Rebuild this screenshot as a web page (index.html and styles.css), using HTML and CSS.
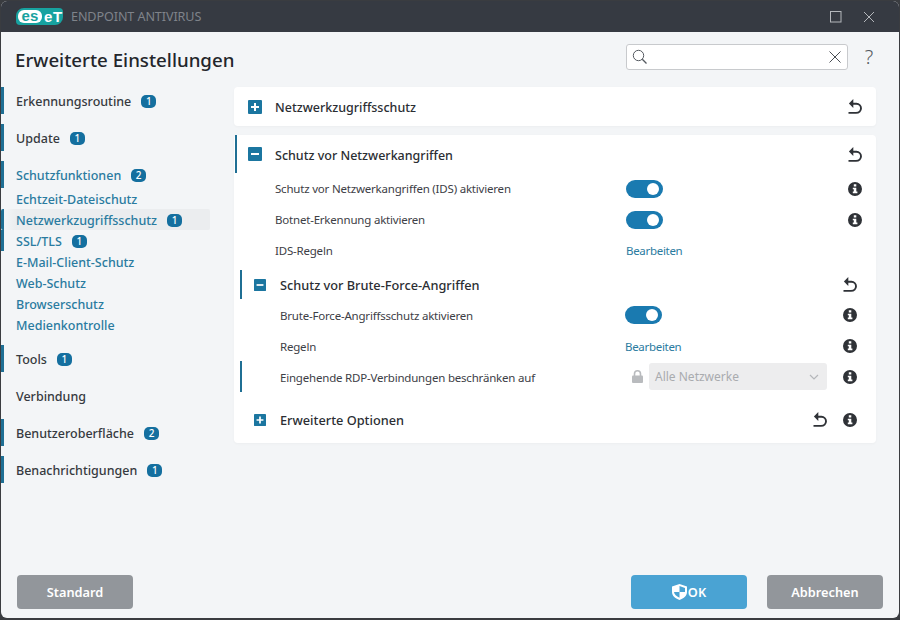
FILE: index.html
```html
<!DOCTYPE html>
<html lang="de">
<head>
<meta charset="utf-8">
<title>ESET Endpoint Antivirus</title>
<link rel="stylesheet" href="styles.css">
</head>
<body>
<svg class="defs" width="0" height="0" aria-hidden="true">
  <symbol id="i-reset" viewBox="0 0 14 15">
    <path d="M.5 13.900H8C11 13.900 13 11.900 13 9.300C13 6.700 11 4.800 8.500 4.800H3.500" fill="none" stroke="currentColor" stroke-width="1.900"/>
    <path d="M5.300 0L.9 4.500L5.300 9V0Z" fill="currentColor"/>
  </symbol>
  <symbol id="i-info" viewBox="0 0 14 14">
    <path fill-rule="evenodd" d="M7 0a7 7 0 1 1 0 14A7 7 0 0 1 7 0ZM5.800 2.300v2.300h2.500V2.300ZM4.800 5.800v1.500h1v2.300h-1v1.600h4.600V9.600H8.300V5.800Z" fill="currentColor"/>
  </symbol>
  <symbol id="i-plus" viewBox="0 0 14 14">
    <rect width="14" height="14" rx="1" fill="#1b76a0"/>
    <path d="M3 7h8M7 3v8" stroke="#fff" stroke-width="2"/>
  </symbol>
  <symbol id="i-minus" viewBox="0 0 14 14">
    <rect width="14" height="14" rx="1" fill="#1b76a0"/>
    <path d="M3 7h8" stroke="#fff" stroke-width="2"/>
  </symbol>
</svg>
<div class="window">
  <header class="titlebar">
    <div class="brand">
      <span class="logo"><span class="logo-es">es</span><span class="logo-et">eT</span></span>
      <span class="product">ENDPOINT ANTIVIRUS</span>
    </div>
    <div class="win-controls">
      <svg class="win-icon" width="12" height="12" viewBox="0 0 12 12"><rect x=".5" y=".5" width="10.500" height="10.500" fill="none" stroke="currentColor"/></svg>
      <svg class="win-icon" width="12" height="12" viewBox="0 0 12 12"><path d="M1 1l10 10M11 1L1 11" fill="none" stroke="currentColor"/></svg>
    </div>
  </header>

  <div class="pagehead">
    <h1 class="pagetitle">Erweiterte Einstellungen</h1>
    <div class="searchbox">
      <svg width="16" height="16" viewBox="0 0 16 16"><circle cx="6.500" cy="6.500" r="5.200" fill="none" stroke="#555a60" stroke-width="1"/><path d="M10.300 10.300L14.500 14.500" stroke="#555a60" stroke-width="1.300"/></svg>
      <svg width="12" height="12" viewBox="0 0 12 12"><path d="M.5.500l11 11M11.500.500l-11 11" fill="none" stroke="#4a4e54" stroke-width="1"/></svg>
    </div>
    <span class="help">?</span>
  </div>

  <div class="content">
    <nav class="nav">
      <a class="nav-top marked">Erkennungsroutine <span class="badge">1</span></a>
      <a class="nav-top marked">Update <span class="badge">1</span></a>
      <div class="nav-group">
        <a class="nav-top active marked">Schutzfunktionen <span class="badge">2</span></a>
        <div class="nav-subs">
          <a class="nav-sub">Echtzeit-Dateischutz</a>
          <a class="nav-sub selected marked">Netzwerkzugriffsschutz <span class="badge">1</span></a>
          <a class="nav-sub marked">SSL/TLS <span class="badge">1</span></a>
          <a class="nav-sub">E-Mail-Client-Schutz</a>
          <a class="nav-sub">Web-Schutz</a>
          <a class="nav-sub">Browserschutz</a>
          <a class="nav-sub">Medienkontrolle</a>
        </div>
      </div>
      <a class="nav-top marked">Tools <span class="badge">1</span></a>
      <a class="nav-top">Verbindung</a>
      <a class="nav-top marked">Benutzeroberfläche <span class="badge">2</span></a>
      <a class="nav-top marked">Benachrichtigungen <span class="badge">1</span></a>
    </nav>

    <main class="main">
      <section class="card card-collapsed">
        <div class="section-head">
          <svg class="sq" width="14" height="14"><use href="#i-plus"/></svg>
          <span class="section-title">Netzwerkzugriffsschutz</span>
          <svg class="ico reset" width="14" height="15"><use href="#i-reset"/></svg>
        </div>
      </section>

      <section class="card">
        <div class="section-head marked-head">
          <svg class="sq" width="14" height="14"><use href="#i-minus"/></svg>
          <span class="section-title">Schutz vor Netzwerkangriffen</span>
          <svg class="ico reset" width="14" height="15"><use href="#i-reset"/></svg>
        </div>
        <div class="rows">
          <div class="row">
            <span class="label">Schutz vor Netzwerkangriffen (IDS) aktivieren</span>
            <span class="toggle"></span>
            <svg class="ico info" width="14" height="14"><use href="#i-info"/></svg>
          </div>
          <div class="row">
            <span class="label">Botnet-Erkennung aktivieren</span>
            <span class="toggle"></span>
            <svg class="ico info" width="14" height="14"><use href="#i-info"/></svg>
          </div>
          <div class="row">
            <span class="label">IDS-Regeln</span>
            <a class="link">Bearbeiten</a>
          </div>
        </div>

        <div class="sub">
          <div class="sub-head">
            <svg class="sq small" width="12" height="12"><use href="#i-minus"/></svg>
            <span class="sub-title">Schutz vor Brute-Force-Angriffen</span>
            <svg class="ico reset" width="14" height="15"><use href="#i-reset"/></svg>
          </div>
          <div class="sub-rows">
            <div class="row sub-row">
              <span class="label">Brute-Force-Angriffsschutz aktivieren</span>
              <span class="toggle"></span>
              <svg class="ico info" width="14" height="14"><use href="#i-info"/></svg>
            </div>
            <div class="row sub-row">
              <span class="label">Regeln</span>
              <a class="link">Bearbeiten</a>
              <svg class="ico info" width="14" height="14"><use href="#i-info"/></svg>
            </div>
            <div class="row sub-row marked-row">
              <span class="label">Eingehende RDP-Verbindungen beschränken auf</span>
              <div class="locked">
                <svg width="11" height="13" viewBox="0 0 11 13"><path d="M2.500 6V3.800a3 3 0 0 1 6 0V6" fill="none" stroke="#b9bbbe" stroke-width="1.600"/><rect y="5.500" width="11" height="7.500" rx="1" fill="#b9bbbe"/></svg>
                <div class="select">
                  <span>Alle Netzwerke</span>
                  <svg width="10" height="6" viewBox="0 0 10 6"><path d="M1 1l4 4 4-4" fill="none" stroke="#b5b7ba" stroke-width="1.200"/></svg>
                </div>
              </div>
              <svg class="ico info" width="14" height="14"><use href="#i-info"/></svg>
            </div>
          </div>
          <div class="sub-head more">
            <svg class="sq small" width="12" height="12"><use href="#i-plus"/></svg>
            <span class="sub-title">Erweiterte Optionen</span>
            <svg class="ico reset" width="14" height="15"><use href="#i-reset"/></svg>
            <svg class="ico info" width="14" height="14"><use href="#i-info"/></svg>
          </div>
        </div>
      </section>
    </main>
  </div>

  <footer class="footer">
    <button class="btn btn-gray" type="button">Standard</button>
    <div class="footer-right">
      <button class="btn btn-blue" type="button">
        <svg width="15" height="16" viewBox="0 0 15 16"><path fill-rule="evenodd" d="M7.500 0L15 2.500V8c0 3.500-3 6.500-7.500 8C3 14.500 0 11.500 0 8V2.500ZM7.500 2v6H2c.3 2.400 2.400 4.400 5.500 5.700V8H13V3.900Z" fill="#fff"/></svg>OK</button>
      <button class="btn btn-gray" type="button">Abbrechen</button>
    </div>
  </footer>
</div>
</body>
</html>
```

FILE: styles.css
```css
* { box-sizing: border-box; }
html, body { margin: 0; height: 100%; }
body {
  background: #3a3c40;
  font-family: "Noto Sans", "Open Sans", sans-serif;
  color: #2f3237;
  overflow: hidden;
  padding: 1px 1px 2px 1px;
}
.defs { position: absolute; }
.window {
  height: 617px;
  background: #f3f5f7;
  border-radius: 6px;
  overflow: hidden;
  display: flex;
  flex-direction: column;
}
.titlebar {
  flex: 0 0 31px;
  background: #363a42;
  display: flex;
  align-items: center;
  justify-content: space-between;
  padding: 0 24px 0 15px;
}
.brand { display: flex; align-items: center; gap: 8px; }
.logo {
  display: flex;
  align-items: center;
  height: 17px;
  width: 47px;
  border-radius: 8px 4px 8px 4px;
  background: #17a2a0;
  overflow: hidden;
  padding-left: 2px;
  font-family: "Liberation Sans", sans-serif;
  font-weight: 700;
  font-size: 15px;
  line-height: 13px;
}
.logo-es {
  background: #fff;
  color: #17a2a0;
  border-radius: 6px;
  height: 13px;
  width: 24px;
  text-align: center;
  line-height: 11px;
}
.logo-et {
  color: #fff;
  letter-spacing: .8px;
  padding-left: 2px;
  line-height: 13px;
  height: 13px;
}
.product { color: #7f838a; font-size: 12.6px; letter-spacing: -.1px; }
.win-controls { display: flex; gap: 21px; align-items: center; }
.win-icon { color: #b4b7bb; display: block; }

.pagehead {
  flex: 0 0 55px;
  display: flex;
  align-items: center;
  padding: 0 21px 0 14px;
}
.pagetitle {
  margin: 0;
  font-size: 18.700px;
  font-weight: 500;
  color: #23262b;
  flex: 1;
  line-height: 26px;
}
.searchbox {
  width: 222px;
  height: 26px;
  margin-bottom: 6px;
  background: #fff;
  border: 1px solid #c8cacd;
  border-radius: 3px;
  display: flex;
  align-items: center;
  justify-content: space-between;
  padding: 0 6px 0 5px;
}
.help {
  width: 40px;
  margin-right: -10px;
  margin-bottom: 6px;
  padding-left: 2px;
  text-align: center;
  font-size: 20px;
  font-weight: 300;
  line-height: 24px;
  color: #555a60;
}

.content { flex: 1; display: flex; min-height: 0; }
.nav {
  flex: 0 0 233px;
  display: flex;
  flex-direction: column;
}
.nav a { display: flex; align-items: center; gap: 8px; white-space: nowrap; }
.nav-top {
  height: 27px;
  margin-bottom: 10px;
  padding: 2px 0 0 12px;
  border-left: 3px solid transparent;
  font-size: 12.500px;
  font-weight: 500;
  color: #363a40;
}
.nav-top.marked { border-left-color: #1f6f94; }
.nav-top.active { color: #2a7ba0; height: 27px; margin-bottom: 0; }
.nav-group { margin-bottom: 10px; }
.nav-sub {
  height: 21px;
  margin-right: 24px;
  padding: 2px 0 0 12px;
  border-left: 3px solid transparent;
  font-size: 12.500px;
  font-weight: 500;
  color: #2a7ba0;
}
.nav-sub.marked { border-left-color: #1f6f94; }
.nav-sub.selected { background: linear-gradient(90deg, #f3f5f7 0, #ebedef 12px); border-radius: 2px; }
.badge {
  display: inline-block;
  width: 15px;
  height: 13px;
  border-radius: 5px;
  background: #146f9f;
  color: #fff;
  font-size: 10px;
  font-weight: 500;
  line-height: 13px;
  text-align: center;
  margin-left: 2px;
}

.main {
  flex: 0 0 642px;
  display: flex;
  flex-direction: column;
  gap: 9px;
}
.card {
  background: #fff;
  border-radius: 4px;
  box-shadow: 0 1px 3px rgba(0, 0, 0, .03);
}
.section-head {
  height: 39px;
  display: flex;
  align-items: center;
  padding: 0 14px;
}
.marked-head {
  margin-left: 1px;
  border-left: 2px solid #1f6f94;
  height: 38px;
  padding-left: 11px;
}
.sq { display: block; flex: none; }
.section-title {
  flex: 1;
  margin-left: 13px;
  padding-top: 1px;
  font-size: 12.500px;
  font-weight: 500;
  color: #2b2e33;
}
.marked-head .section-title { padding-top: 3px; }
.ico { display: block; flex: none; color: #2f3237; }
.rows { display: flex; flex-direction: column; }
.row {
  height: 31px;
  display: grid;
  grid-template-columns: 351px 1fr 14px;
  align-items: center;
  padding: 0 14px 0 41px;
}
.row > .ico { grid-column: 3; }
.label { font-size: 11.500px; letter-spacing: -.2px; color: #3d4046; }
.link { font-size: 11.500px; letter-spacing: -.3px; color: #2a7ba0; }
.toggle {
  display: block;
  position: relative;
  width: 37px;
  height: 18px;
  border-radius: 9px;
  background: #1a7ab0;
}
.toggle::after {
  content: "";
  position: absolute;
  right: 4px;
  top: 3px;
  width: 12px;
  height: 12px;
  border-radius: 50%;
  background: #fff;
}
.sub { margin: 4px 19px 0 6px; }
.sub-head {
  height: 29px;
  display: flex;
  align-items: center;
  border-left: 2px solid #1f6f94;
  padding-left: 12px;
}
.sub-title {
  flex: 1;
  margin-left: 14px;
  font-size: 12.750px;
  font-weight: 500;
  color: #2b2e33;
}
.sub-row { padding: 0 0 0 40px; grid-template-columns: 345px 1fr 14px; }
.sub-row .label, .sub-row .link { padding-top: 2px; }
.marked-row { border-left: 2px solid #1f6f94; padding-left: 38px; }
.locked { display: flex; align-items: center; gap: 6px; padding-left: 7px; }
.select {
  width: 178px;
  height: 27px;
  background: #ededee;
  border-radius: 3px;
  display: flex;
  align-items: center;
  justify-content: space-between;
  padding: 0 8px 0 6px;
  font-size: 12px;
  color: #a9abae;
}
.more { border-left-color: transparent; height: 47px; margin-top: 4px; gap: 16px; }
.more .sub-title { margin-left: -2px; }

.footer {
  flex: 0 0 43px;
  display: flex;
  justify-content: space-between;
  padding: 0 16px 9px 16px;
  margin-top: auto;
}
.footer-right { display: flex; gap: 20px; }
.btn {
  width: 116px;
  height: 34px;
  border: 0;
  border-radius: 4px;
  color: #fff;
  font-family: inherit;
  font-size: 12.750px;
  font-weight: 600;
  display: flex;
  align-items: center;
  justify-content: center;
  gap: 1px;
  padding: 0;
}
.btn-gray { background: #92969b; }
.btn-blue { background: #4aa3d3; }
```
